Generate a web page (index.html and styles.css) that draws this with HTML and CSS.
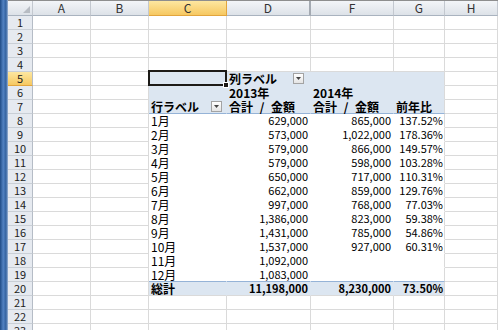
FILE: index.html
```html
<!DOCTYPE html>
<html lang="ja">
<head>
    <meta charset="UTF-8">
    <title>ピボットテーブル</title>
    <link rel="stylesheet" href="styles.css">
</head>
<body>
<div class="sheet">
    <div class="edge"></div>
    <div class="grid">
        <div class="row head">
            <div class="corner"><svg width="7" height="7" viewBox="0 0 7 7"><polygon points="7,0 7,7 0,7" fill="#b7bcc3"/></svg></div>
            <div>A</div><div>B</div><div class="sel">C</div><div class="hid">D</div><div>F</div><div>G</div><div>H</div>
        </div>
        <div class="row"><div class="rh">1</div><div></div><div></div><div></div><div></div><div></div><div></div><div></div></div>
        <div class="row"><div class="rh">2</div><div></div><div></div><div></div><div></div><div></div><div></div><div></div></div>
        <div class="row"><div class="rh">3</div><div></div><div></div><div></div><div></div><div></div><div></div><div></div></div>
        <div class="row"><div class="rh">4</div><div></div><div></div><div></div><div></div><div></div><div></div><div></div></div>

        <!-- pivot header -->
        <div class="row">
            <div class="rh sel">5</div><div></div><div></div>
            <div class="ph cur"><div class="cursor"><div class="handle"></div></div></div>
            <div class="ph dd">列ラベル<span class="btn"><svg width="5" height="3" viewBox="0 0 5 3"><polygon points="0,0 5,0 2.5,3" fill="#444"/></svg></span></div>
            <div class="ph"></div><div class="ph g"></div><div></div>
        </div>
        <div class="row">
            <div class="rh">6</div><div></div><div></div>
            <div class="ph"></div><div class="ph">2013年</div><div class="ph">2014年</div><div class="ph g"></div><div></div>
        </div>
        <div class="row">
            <div class="rh">7</div><div></div><div></div>
            <div class="ph end dd">行ラベル<span class="btn"><svg width="5" height="3" viewBox="0 0 5 3"><polygon points="0,0 5,0 2.5,3" fill="#444"/></svg></span></div>
            <div class="ph end sum">合計 / 金額</div><div class="ph end sum">合計 / 金額</div><div class="ph end g">前年比</div><div></div>
        </div>

        <!-- pivot body -->
        <div class="row"><div class="rh">8</div><div></div><div></div><div class="pv">1月</div><div class="pv num">629,000</div><div class="pv num">865,000</div><div class="pv num g">137.52%</div><div></div></div>
        <div class="row"><div class="rh">9</div><div></div><div></div><div class="pv">2月</div><div class="pv num">573,000</div><div class="pv num">1,022,000</div><div class="pv num g">178.36%</div><div></div></div>
        <div class="row"><div class="rh">10</div><div></div><div></div><div class="pv">3月</div><div class="pv num">579,000</div><div class="pv num">866,000</div><div class="pv num g">149.57%</div><div></div></div>
        <div class="row"><div class="rh">11</div><div></div><div></div><div class="pv">4月</div><div class="pv num">579,000</div><div class="pv num">598,000</div><div class="pv num g">103.28%</div><div></div></div>
        <div class="row"><div class="rh">12</div><div></div><div></div><div class="pv">5月</div><div class="pv num">650,000</div><div class="pv num">717,000</div><div class="pv num g">110.31%</div><div></div></div>
        <div class="row"><div class="rh">13</div><div></div><div></div><div class="pv">6月</div><div class="pv num">662,000</div><div class="pv num">859,000</div><div class="pv num g">129.76%</div><div></div></div>
        <div class="row"><div class="rh">14</div><div></div><div></div><div class="pv">7月</div><div class="pv num">997,000</div><div class="pv num">768,000</div><div class="pv num g">77.03%</div><div></div></div>
        <div class="row"><div class="rh">15</div><div></div><div></div><div class="pv">8月</div><div class="pv num">1,386,000</div><div class="pv num">823,000</div><div class="pv num g">59.38%</div><div></div></div>
        <div class="row"><div class="rh">16</div><div></div><div></div><div class="pv">9月</div><div class="pv num">1,431,000</div><div class="pv num">785,000</div><div class="pv num g">54.86%</div><div></div></div>
        <div class="row"><div class="rh">17</div><div></div><div></div><div class="pv">10月</div><div class="pv num">1,537,000</div><div class="pv num">927,000</div><div class="pv num g">60.31%</div><div></div></div>
        <div class="row"><div class="rh">18</div><div></div><div></div><div class="pv">11月</div><div class="pv num">1,092,000</div><div class="pv num"></div><div class="pv num g"></div><div></div></div>
        <div class="row"><div class="rh">19</div><div></div><div></div><div class="pv end">12月</div><div class="pv end num">1,083,000</div><div class="pv end num"></div><div class="pv end num g"></div><div></div></div>

        <!-- grand total -->
        <div class="row"><div class="rh">20</div><div></div><div></div><div class="pt">総計</div><div class="pt num">11,198,000</div><div class="pt num">8,230,000</div><div class="pt num g">73.50%</div><div></div></div>

        <div class="row"><div class="rh">21</div><div></div><div></div><div></div><div></div><div></div><div></div><div></div></div>
        <div class="row"><div class="rh">22</div><div></div><div></div><div></div><div></div><div></div><div></div><div></div></div>
        <div class="row"><div class="rh">23</div><div></div><div></div><div></div><div></div><div></div><div></div><div></div></div>
    </div>
</div>
</body>
</html>
```
FILE: styles.css
```css
body {
    margin: 0;
    font-family: "Noto Sans CJK JP", sans-serif;
    font-size: 12px;
    color: #000;
    background: #fff;
}
.sheet {
    display: flex;
    height: 330px;
    overflow: hidden;
}
.edge {
    width: 8px;
    flex: none;
    background: linear-gradient(to right, #1f4b85, #5282c2 40%, #33629f 75%, #9db5d6);
}
.grid {
    flex: 1;
}
.row {
    display: grid;
    grid-template-columns: 25px 58px 58px 78px 84px 83px 51px 1fr;
    height: 14px;
}
.row > div {
    box-sizing: border-box;
    border-right: 1px solid #dadada;
    border-bottom: 1px solid #dadada;
    line-height: 13px;
    white-space: nowrap;
    padding: 0 2px;
}

/* column headers */
.head {
    height: 16px;
    box-sizing: border-box;
    border-top: 1px solid #8e8e8e;
}
.head > div {
    background: linear-gradient(#f3f5f8, #dde2e8);
    border-right-color: #c3c8cf;
    border-bottom-color: #a9b3bf;
    text-align: center;
    line-height: 14px;
    color: #333;
}
.head > .sel {
    background: linear-gradient(#fde7a0, #f6c861);
    border-right-color: #e2a53d;
    border-bottom-color: #e2a53d;
}
.head > .hid {
    border-right: 2px solid #a4aab2;
}
.head > .corner {
    display: flex;
    justify-content: flex-end;
    align-items: flex-end;
    padding: 2px;
}

/* row headers */
.row > .rh {
    background: #e6eaf0;
    border-right-color: #b5bcc6;
    border-bottom-color: #c9cfd6;
    text-align: center;
    font-size: 11px;
    color: #222;
}
.row > .rh.sel {
    background: linear-gradient(#fde7a0, #f6c861);
    border-bottom-color: #e2a53d;
}

/* pivot table */
.row > .pv {
    border-color: transparent;
}
.row > .ph {
    background: #dce6f1;
    border-color: transparent;
    font-weight: bold;
}
.row > .pt {
    background: #dce6f1;
    border-right-color: transparent;
    font-weight: bold;
}
.row > .end {
    border-bottom-color: #95b3d7;
}
.row > .g {
    border-right-color: #dadada;
}
.row > .num {
    text-align: right;
    font-size: 11px;
    padding-right: 2px;
}
.row > .g.num {
    padding-right: 1px;
}
.sum {
    word-spacing: 4px;
}
.dd {
    display: flex;
    justify-content: space-between;
    align-items: center;
}
.btn {
    width: 11px;
    height: 11px;
    box-sizing: border-box;
    border: 1px solid #a3a3a3;
    background: linear-gradient(#fff, #e4e4e4);
    display: flex;
    align-items: center;
    justify-content: center;
    margin-right: 2px;
}
.row > .dd:nth-child(5) .btn {
    margin-right: 4px;
}

/* active cell */
.cur {
    position: relative;
}
.cursor {
    position: absolute;
    left: -1px;
    top: -2px;
    right: -1px;
    bottom: -1px;
    border: 2px solid #1c1a17;
}
.handle {
    position: absolute;
    right: -4px;
    bottom: -4px;
    width: 4px;
    height: 4px;
    background: #1c1a17;
    border: 1px solid #fff;
}
```
